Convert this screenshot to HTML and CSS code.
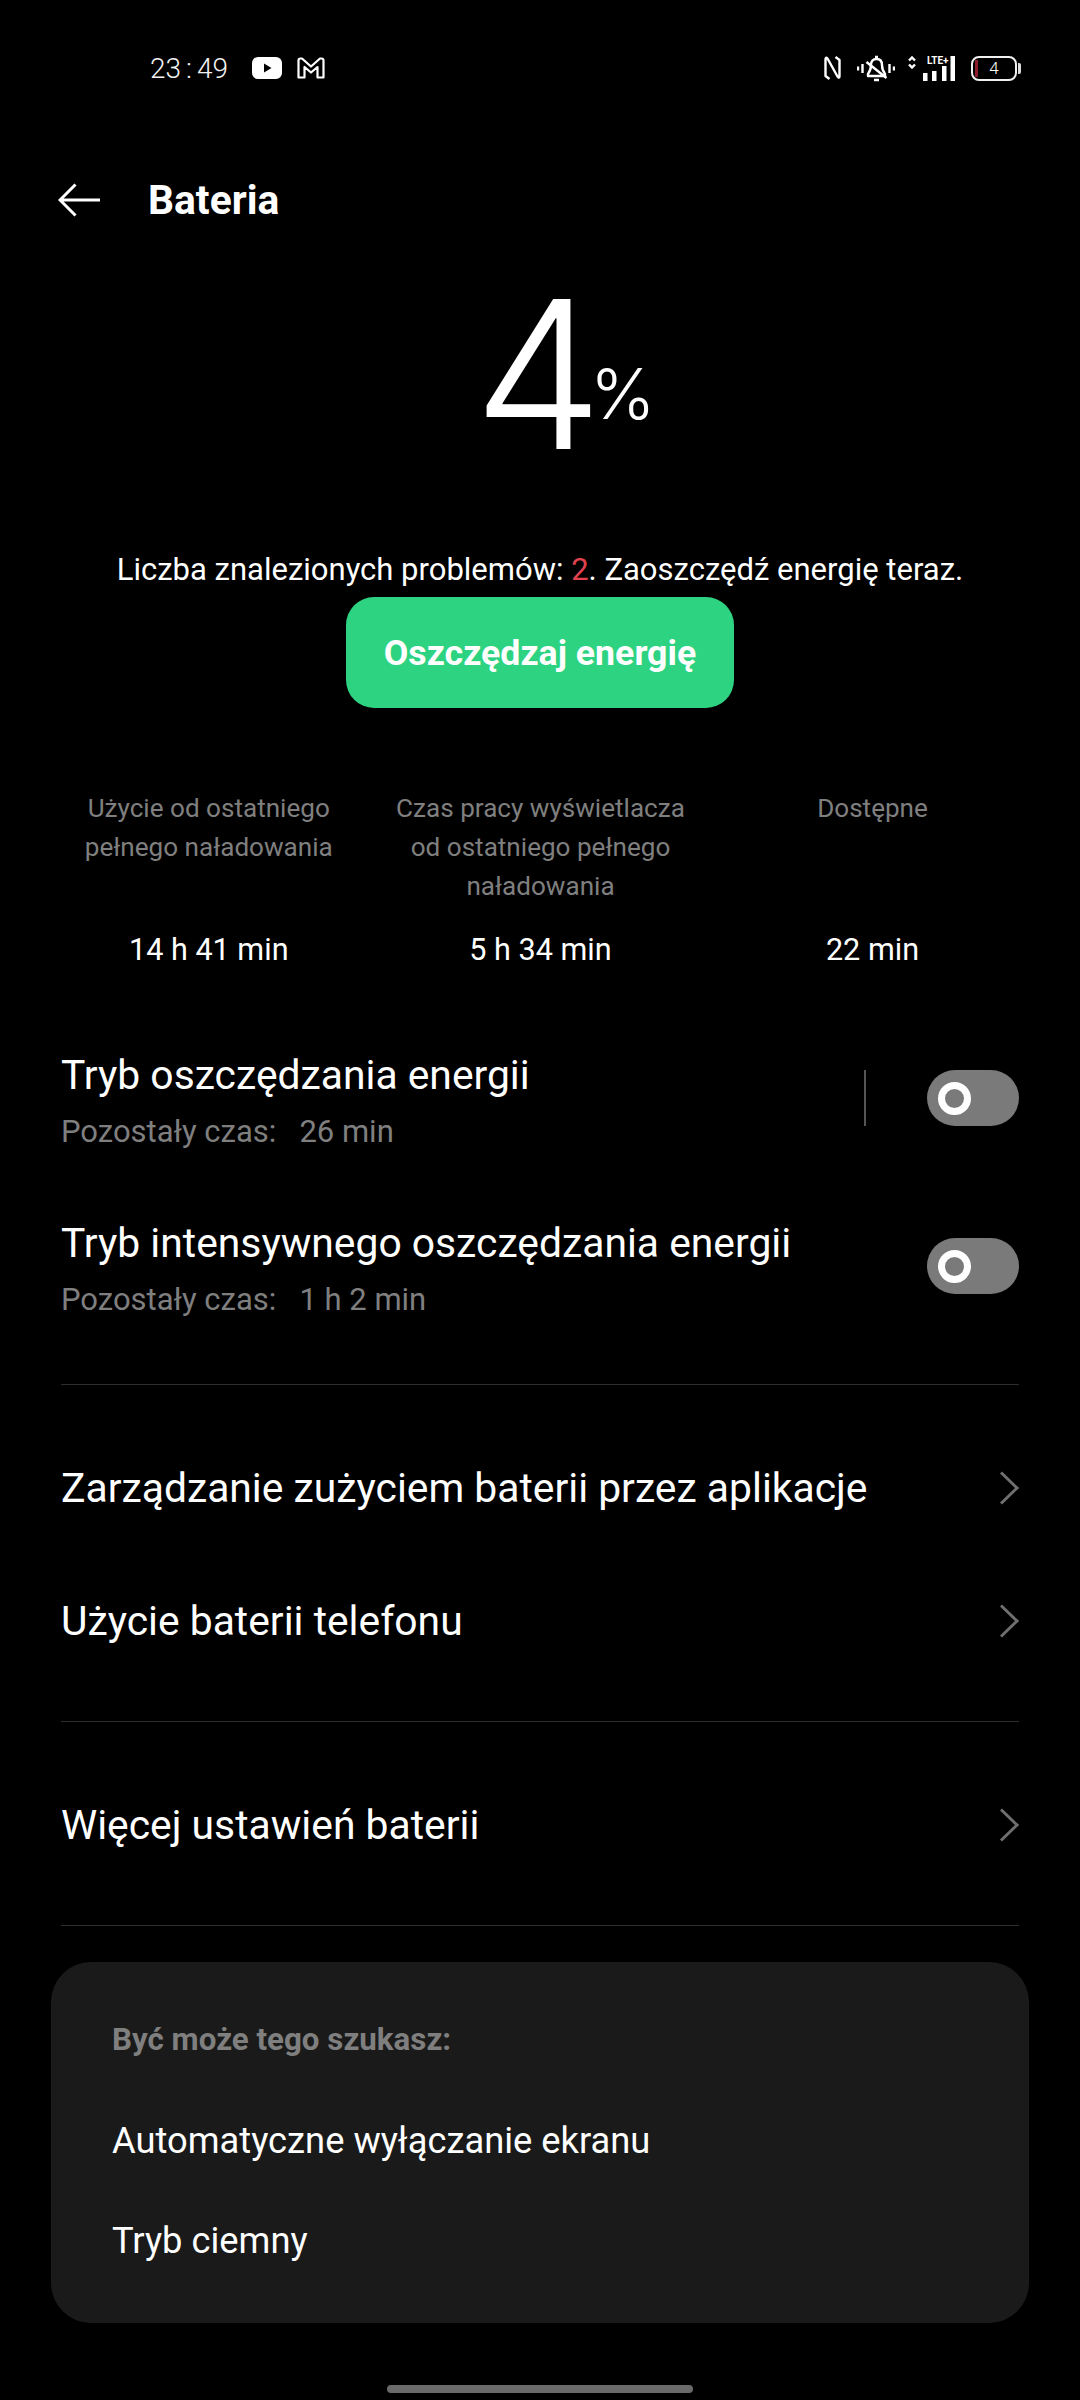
FILE: index.html
```html
<!DOCTYPE html>
<html lang="pl">
<head>
  <meta charset="UTF-8">
  <meta name="viewport" content="width=device-width, initial-scale=1.0">
  <title>Bateria</title>
  <link rel="stylesheet" href="styles.css">
</head>
<body>

  <!-- status bar -->
  <div class="status-bar">
    <div class="status-left">
      <span class="clock">23<span class="clock-colon">:</span>49</span>
      <svg class="icon-yt" width="30" height="22" viewBox="0 0 30 22">
        <rect x="0" y="0" width="30" height="22" rx="6" fill="#fff"/>
        <path d="M12 6.500v9l7.500-4.500z" fill="#000"/>
      </svg>
      <svg class="icon-gmail" width="28" height="22" viewBox="0 0 28 22">
        <path d="M1.500 20.500V3.500Q1.500 1.500 3.500 1.500H5L14 9.500L23 1.500H24.500Q26.500 1.500 26.500 3.500V20.500H20.500V10L14 15.500L7.500 10V20.500Z" fill="none" stroke="#fff" stroke-width="2.200" stroke-linejoin="round"/>
      </svg>
    </div>
    <div class="status-right">
      <svg class="icon-nfc" width="17" height="24" viewBox="0 0 17 24">
        <path d="M5.500 23L1.500 20V3.500Q1.500 0.500 3.500 2.500L13.500 20.500Q15.500 23 15.500 20V4L11.500 1" fill="none" stroke="#fff" stroke-width="2.400" stroke-linejoin="round"/>
      </svg>
      <svg class="icon-bell" width="38" height="27" viewBox="0 0 38 27">
        <path d="M11 19Q14 15 14 10Q14 4 19.500 4Q25 4 25 10Q25 15 28 19V21H11Z" fill="none" stroke="#fff" stroke-width="2.400" stroke-linejoin="round"/>
        <path d="M17 25H22M18 2H21M9.500 7L29.500 23M1 11.500V15.500M5.500 9V18M32.500 9V18M37 11.500V15.500" fill="none" stroke="#fff" stroke-width="2.400"/>
      </svg>
      <svg class="icon-arrows" width="8" height="13" viewBox="0 0 8 13">
        <path d="M1 4.500L4 1.500L7 4.500M1 8.500L4 11.500L7 8.500" fill="none" stroke="#fff" stroke-width="2.400"/>
      </svg>
      <div class="signal-bars">
        <span class="lte">LTE+</span>
        <svg width="32" height="25" viewBox="0 0 32 25">
          <path d="M0 17h4.500v8H0zM9 15h4.500v10H9zM19 10h4.500v15H19zM27.500 0h4.500v25h-4.500z" fill="#fff"/>
        </svg>
      </div>
      <div class="battery">
        <div class="battery-body"><span class="battery-fill"></span>4</div>
        <span class="battery-nub"></span>
      </div>
    </div>
  </div>

  <!-- naglowek -->
  <div class="topbar">
    <svg class="back" width="42" height="34" viewBox="0 0 42 34">
      <path d="M42 17H2M17.500 1.500L2 17L17.500 32.500" fill="none" stroke="#fff" stroke-width="3"/>
    </svg>
    <h1>Bateria</h1>
  </div>

  <!-- poziom baterii -->
  <div class="level">
    <span class="level-num">4</span><span class="level-pct">%</span>
  </div>
  <p class="notice">Liczba znalezionych problemów: <span class="notice-count">2</span>. Zaoszczędź energię teraz.</p>
  <div class="save-wrap">
    <button class="save-btn">Oszczędzaj energię</button>
  </div>

  <!-- statystyki -->
  <div class="stats">
    <div class="stat">
      <div class="stat-label">Użycie od ostatniego<br>pełnego naładowania</div>
      <div class="stat-value">14 h 41 min</div>
    </div>
    <div class="stat">
      <div class="stat-label">Czas pracy wyświetlacza<br>od ostatniego pełnego<br>naładowania</div>
      <div class="stat-value">5 h 34 min</div>
    </div>
    <div class="stat">
      <div class="stat-label">Dostępne</div>
      <div class="stat-value">22 min</div>
    </div>
  </div>

  <!-- tryby -->
  <div class="modes">
    <div class="mode">
      <div class="mode-text">
        <div class="mode-title">Tryb oszczędzania energii</div>
        <div class="mode-sub">Pozostały czas:&nbsp;&nbsp; 26 min</div>
      </div>
      <span class="mode-sep"></span>
      <span class="switch"><span class="switch-knob"></span></span>
    </div>
    <div class="mode">
      <div class="mode-text">
        <div class="mode-title">Tryb intensywnego oszczędzania energii</div>
        <div class="mode-sub">Pozostały czas:&nbsp;&nbsp; 1 h 2 min</div>
      </div>
      <span class="switch"><span class="switch-knob"></span></span>
    </div>
  </div>

  <div class="group">
    <div class="link-row">
      <span>Zarządzanie zużyciem baterii przez aplikacje</span>
      <svg width="20" height="34" viewBox="0 0 20 34"><path d="M2 1.500L18 17L2 32.500" fill="none" stroke="#6f6f6f" stroke-width="3"/></svg>
    </div>
    <div class="link-row">
      <span>Użycie baterii telefonu</span>
      <svg width="20" height="34" viewBox="0 0 20 34"><path d="M2 1.500L18 17L2 32.500" fill="none" stroke="#6f6f6f" stroke-width="3"/></svg>
    </div>
  </div>

  <div class="group group-last">
    <div class="link-row">
      <span>Więcej ustawień baterii</span>
      <svg width="20" height="34" viewBox="0 0 20 34"><path d="M2 1.500L18 17L2 32.500" fill="none" stroke="#6f6f6f" stroke-width="3"/></svg>
    </div>
  </div>

  <!-- sugestie -->
  <div class="suggest">
    <div class="suggest-head">Być może tego szukasz:</div>
    <div class="suggest-item">Automatyczne wyłączanie ekranu</div>
    <div class="suggest-item">Tryb ciemny</div>
  </div>

  <div class="home-bar"></div>

</body>
</html>
```

FILE: styles.css
```css
* {
  box-sizing: border-box;
}
body {
  margin: 0;
  width: 1080px;
  height: 2400px;
  overflow: hidden;
  background: #000;
  color: #fff;
  font-family: Roboto, sans-serif;
}
.status-bar {
  height: 136px;
  padding: 0 59px 0 150px;
  display: flex;
  align-items: center;
  justify-content: space-between;
}
.status-left,
.status-right {
  display: flex;
  align-items: center;
}
.clock {
  font-size: 28px;
  font-weight: 300;
  color: #f2f2f2;
  width: 102px;
}
.clock-colon {
  margin: 0 5px;
}
.icon-gmail {
  margin-left: 15px;
}
.icon-bell {
  margin-left: 16px;
}
.icon-arrows {
  margin: 0 7px 12px 13px;
}
.signal-bars {
  position: relative;
}
.signal-bars svg {
  display: block;
}
.lte {
  position: absolute;
  top: 0;
  left: 4px;
  font-size: 10px;
  font-weight: 700;
  line-height: 10px;
}
.battery {
  display: flex;
  align-items: center;
  margin-left: 16px;
}
.battery-body {
  width: 46px;
  height: 25px;
  border: 2.500px solid #f0f0f0;
  border-radius: 8px;
  display: flex;
  align-items: center;
  justify-content: center;
  font-size: 17px;
  font-weight: 300;
  position: relative;
  overflow: hidden;
}
.battery-fill {
  position: absolute;
  left: 2px;
  top: 2px;
  bottom: 2px;
  width: 3px;
  background: #8c1c2a;
}
.battery-nub {
  width: 3px;
  height: 11px;
  margin-left: 1px;
  background: #ddd;
  border-radius: 0 2px 2px 0;
}
.topbar {
  height: 128px;
  padding-left: 58px;
  display: flex;
  align-items: center;
}
.back {
  margin-right: 48px;
}
h1 {
  margin: 0;
  font-size: 40.800px;
  font-weight: 700;
}
.level {
  height: 280px;
  padding-left: 49px;
  display: flex;
  justify-content: center;
  align-items: flex-start;
}
.level-num {
  font-family: Inter, sans-serif;
  font-size: 206px;
  font-weight: 350;
  line-height: 220px;
  letter-spacing: -13px;
}
.level-pct {
  font-family: Inter, sans-serif;
  font-size: 70px;
  font-weight: 300;
  line-height: 76px;
  margin-top: 92px;
}
.notice {
  margin: 0;
  height: 52px;
  line-height: 52px;
  text-align: center;
  font-size: 31px;
}
.notice-count {
  color: #e0424f;
}
.save-wrap {
  display: flex;
  justify-content: center;
  margin-top: 1px;
}
.save-btn {
  width: 388px;
  height: 111px;
  border: none;
  border-radius: 28px;
  background: #2dd381;
  color: #fff;
  font-family: Roboto, sans-serif;
  font-size: 35.700px;
  font-weight: 700;
}
.stats {
  margin-top: 81px;
  padding: 0 42px 0 43px;
  display: grid;
  grid-template-columns: 331.500px 332px 332px;
  text-align: center;
}
.stat-label {
  height: 139px;
  font-size: 26.100px;
  line-height: 39px;
  color: #7f7f7f;
}
.stat-value {
  height: 44px;
  line-height: 44px;
  font-size: 30.600px;
}
.modes {
  margin-top: 42px;
  padding: 0 61px;
}
.mode {
  height: 168px;
  display: flex;
  align-items: center;
}
.mode-text {
  flex: 1;
  padding-top: 7px;
}
.mode-title {
  font-size: 40.800px;
  line-height: 56px;
}
.mode-sub {
  margin-top: 4px;
  font-size: 31px;
  line-height: 50px;
  color: #7f7f7f;
}
.mode-sep {
  width: 2px;
  height: 56px;
  margin-right: 61px;
  background: #555;
}
.switch {
  width: 92px;
  height: 56px;
  border-radius: 28px;
  background: #7a7a7a;
  display: flex;
  align-items: center;
  padding-left: 11px;
}
.switch-knob {
  width: 33px;
  height: 33px;
  border: 7px solid #fff;
  border-radius: 50%;
}
.group {
  margin: 0 61px;
  padding: 36px 0 34px;
  border-top: 1px solid #2e2e2e;
}
.modes + .group {
  margin-top: 34px;
}
.group-last {
  border-bottom: 1px solid #2e2e2e;
}
.link-row {
  height: 133px;
  display: flex;
  align-items: center;
  justify-content: space-between;
  font-size: 40.800px;
}
.suggest {
  margin: 36px 51px 0;
  height: 361px;
  padding: 53px 61px 0;
  border-radius: 40px;
  background: #1a1a1a;
}
.suggest-head {
  font-size: 31.300px;
  font-weight: 700;
  color: #7f7f7f;
  line-height: 50px;
  margin-bottom: 26px;
}
.suggest-item {
  font-size: 36.300px;
  line-height: 100px;
}
.home-bar {
  width: 306px;
  height: 8px;
  margin: 62px auto 0;
  border-radius: 4px;
  background: #6a6a6a;
}
```
